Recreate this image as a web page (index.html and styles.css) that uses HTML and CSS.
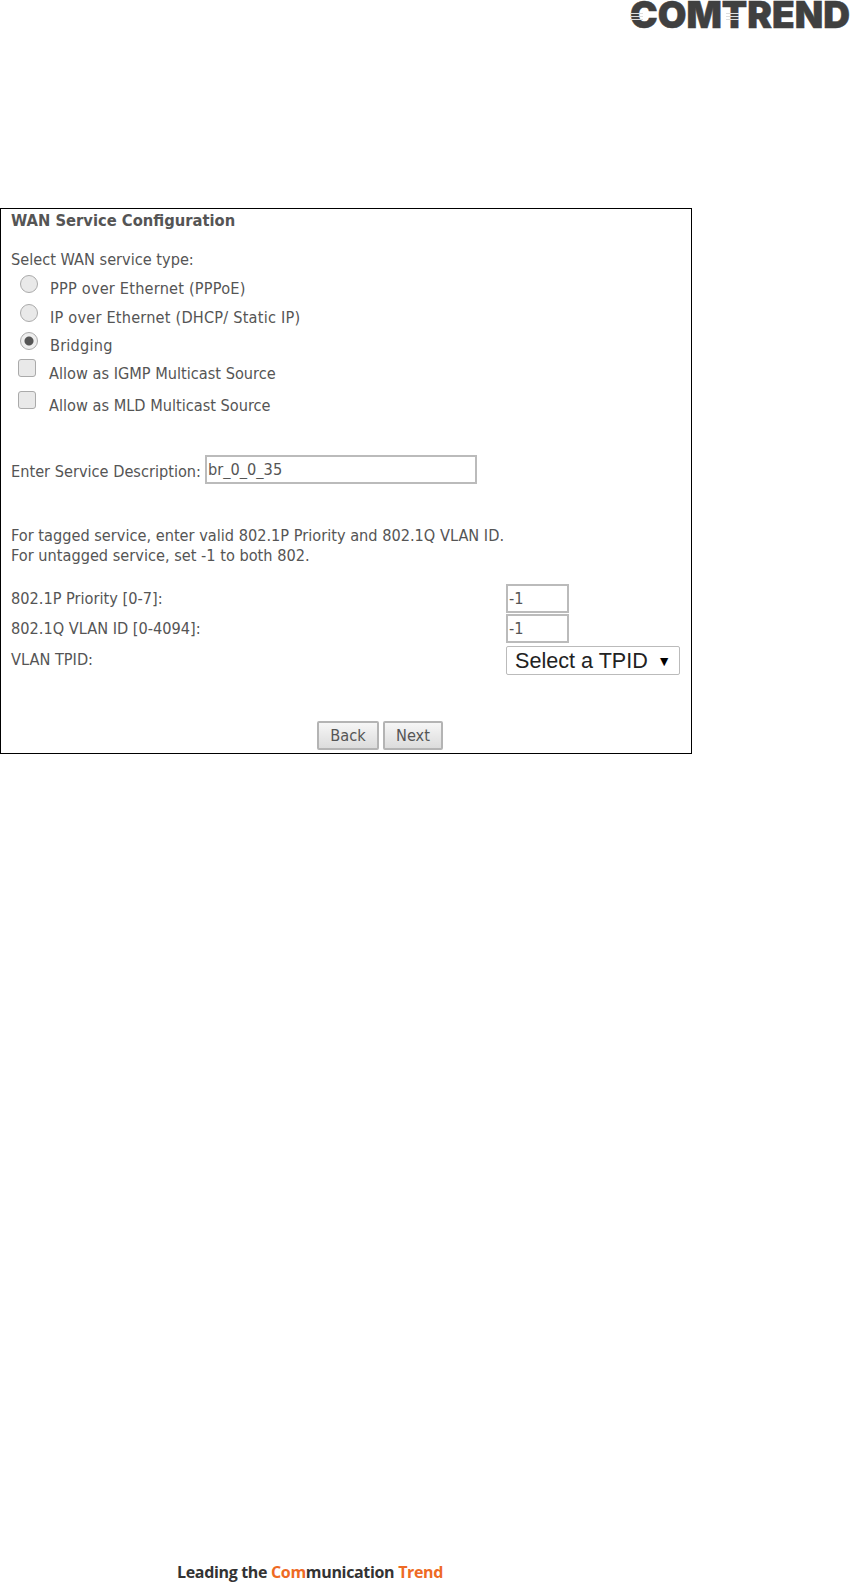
FILE: index.html
```html
<!DOCTYPE html>
<html>
<head>
<meta charset="utf-8">
<title>WAN Service Configuration</title>
<link rel="stylesheet" href="styles.css">
</head>
<body>
<header class="top">
	<svg class="logo" width="220" height="30" viewBox="0 0 220 30">
		<text class="logo-text" x="0" y="28" textLength="220" lengthAdjust="spacingAndGlyphs">COMTREND</text>
		<path class="logo-lines" d="M0 13.5H13M0 16.5H13M0 19.5H13M96 13.5H109M96 16.5H109M96 19.5H109"/>
	</svg>
</header>
<section class="frame">
	<div class="title">WAN Service Configuration</div>
	<div class="select-type">Select WAN service type:</div>
	<div class="opts">
		<label class="opt"><input type="radio" name="svc"><span>PPP over Ethernet (PPPoE)</span></label>
		<label class="opt"><input type="radio" name="svc"><span>IP over Ethernet (DHCP/ Static IP)</span></label>
		<label class="opt"><input type="radio" name="svc" checked><span>Bridging</span></label>
	</div>
	<label class="chk"><input type="checkbox"><span>Allow as IGMP Multicast Source</span></label>
	<label class="chk"><input type="checkbox"><span>Allow as MLD Multicast Source</span></label>
	<div class="desc">
		<span class="desc-label">Enter Service Description:</span>
		<input class="txt txt-long" type="text" value="br_0_0_35">
	</div>
	<p class="note">For tagged service, enter valid 802.1P Priority and 802.1Q VLAN ID.<br>For untagged service, set -1 to both 802.</p>
	<div class="vlan">
		<span>802.1P Priority [0-7]:</span>
		<input class="txt txt-short" type="text" value="-1">
		<span>802.1Q VLAN ID [0-4094]:</span>
		<input class="txt txt-short" type="text" value="-1">
		<span>VLAN TPID:</span>
		<div class="tpid">Select a TPID<span class="arrow">▼</span></div>
	</div>
	<div class="btns">
		<button class="btn btn-back">Back</button>
		<button class="btn btn-next">Next</button>
	</div>
</section>
<footer class="foot">Leading the <span class="orange">Com</span>munication <span class="orange">Trend</span></footer>
</body>
</html>
```

FILE: styles.css
```css
html, body {
	margin: 0;
	height: 1583px;
	background: #fff;
}
body {
	display: flex;
	flex-direction: column;
	font-family: "DejaVu Sans Condensed", "DejaVu Sans", sans-serif;
	font-size: 16.2px;
	color: #555;
	overflow: hidden;
}
.top {
	display: flex;
	justify-content: flex-end;
	height: 30px;
	padding-right: 1px;
}
.logo {
	display: block;
}
.logo-text {
	font-family: Inter, sans-serif;
	font-weight: 900;
	font-size: 37px;
	fill: #404040;
	stroke: #404040;
	stroke-width: 0.5;
}
.logo-lines {
	stroke: #ddd;
	stroke-width: 1;
	fill: none;
}
.frame {
	width: 690px;
	height: 544px;
	margin-top: 178px;
	border: 1px solid #000;
}
.title {
	margin: 3px 0 0 10px;
	font-weight: bold;
	font-size: 16.4px;
	line-height: 17px;
}
.select-type {
	margin: 22px 0 7px 10px;
	line-height: 17px;
}
.opts {
	height: 84px;
}
.opt, .chk {
	display: flex;
	align-items: flex-start;
	line-height: 19px;
}
.opt {
	height: 28.5px;
	padding-left: 19px;
}
.opt span {
	margin: 4px 0 0 12px;
	letter-spacing: 0.2px;
}
.opt input, .chk input {
	appearance: none;
	margin: 0;
	background: #e9e9e9;
	border: 1px solid #aaa;
	box-sizing: border-box;
	width: 18px;
	height: 18px;
	flex: none;
}
.opt input {
	border-radius: 50%;
}
.opt input:checked {
	background: radial-gradient(circle, #555 0, #555 4px, #eee 5px);
}
.chk {
	height: 32px;
	padding-left: 17px;
}
.chk input {
	border-radius: 3px;
}
.chk span {
	margin: 5px 0 0 13px;
}
.desc {
	display: flex;
	align-items: center;
	margin: 32px 0 0 10px;
	gap: 4px;
}
.desc-label {
	padding-top: 3px;
}
.txt {
	box-sizing: border-box;
	border: 2px solid #bbb;
	padding: 0 1px;
	font: inherit;
	color: #555;
	outline: none;
}
.txt-long {
	width: 272px;
	height: 29px;
}
.note {
	margin: 42px 0 0 10px;
	line-height: 20px;
}
.vlan {
	display: grid;
	grid-template-columns: 495px 174px;
	grid-template-rows: 30px 30px 32px;
	align-items: center;
	margin: 17px 0 0 10px;
}
.txt-short {
	width: 63px;
	height: 29px;
}
.tpid {
	display: flex;
	align-items: center;
	justify-content: space-between;
	align-self: end;
	box-sizing: border-box;
	height: 29px;
	padding: 0 8px;
	border: 1px solid #bbb;
	border-radius: 2px;
	font-family: "Liberation Sans", sans-serif;
	font-size: 21.6px;
	color: #222;
}
.arrow {
	font-size: 14px;
	color: #000;
}
.btns {
	display: flex;
	gap: 4px;
	margin: 46px 0 0 316px;
}
.btn {
	box-sizing: border-box;
	height: 29px;
	padding: 0;
	border: 2px solid #b4b4b4;
	border-radius: 2px;
	background: linear-gradient(#f6f6f6, #dcdcdc);
	font: inherit;
	color: #555;
}
.btn-back {
	width: 62px;
}
.btn-next {
	width: 60px;
}
.foot {
	margin-top: auto;
	padding-left: 177px;
	font-family: "Open Sans", sans-serif;
	font-weight: bold;
	font-size: 16px;
	letter-spacing: -0.33px;
	line-height: 22px;
	color: #333;
}
.orange {
	color: #ee6a24;
}
```
